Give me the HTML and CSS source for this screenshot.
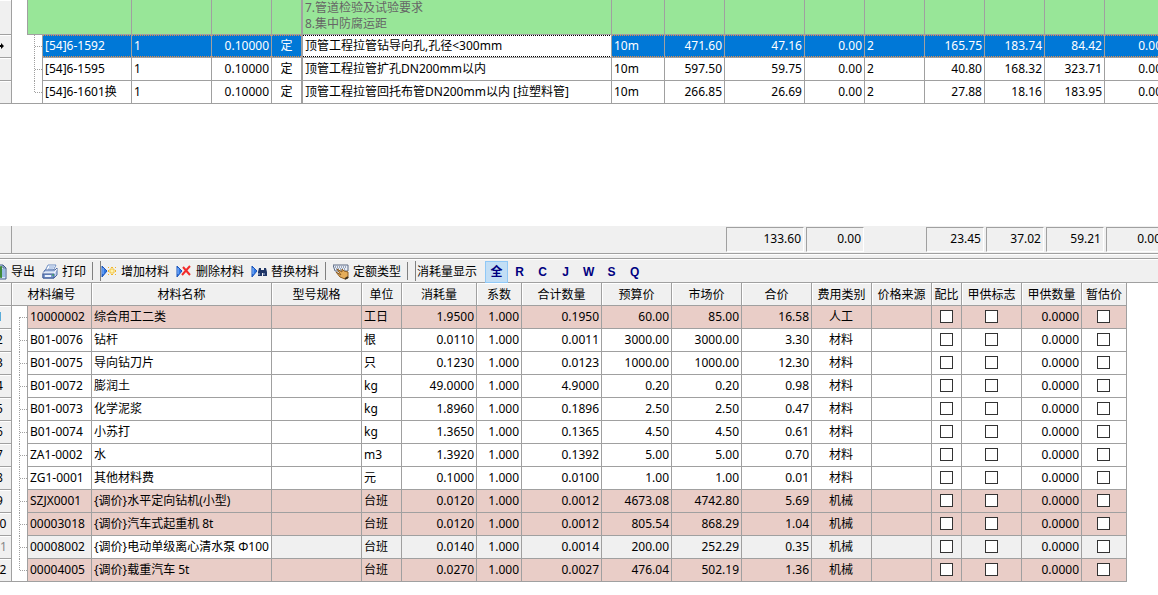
FILE: index.html
```html
<!DOCTYPE html>
<html lang="zh-CN">
<head>
<meta charset="utf-8">
<title>定额材料</title>
<link rel="stylesheet" href="styles.css">
</head>
<body>
<main class="app">
<section class="quota-pane">
<table class="grid quota">
<colgroup><col class="w24"><col class="w16"><col class="w15"><col class="w89"><col class="w80"><col class="w60"><col class="w31"><col class="w309"><col class="w53"><col class="w60"><col class="w80"><col class="w60"><col class="w60"><col class="w60"><col class="w60"><col class="w60"><col class="w60"></colgroup>
<tbody>
<tr class="item"><th></th><td class="indent"></td><td colspan="2"></td><td></td><td></td><td></td><td>7.管道检验及试验要求<br>8.集中防腐运距</td><td></td><td></td><td></td><td></td><td></td><td></td><td></td><td></td><td></td></tr>
<tr class="selected"><th><svg class="marker" viewBox="0 0 8 8"><path d="M0 3h5V1l3 3-3 3V5H0z"/></svg></th><td class="tree" colspan="2"></td><td>[54]6-1592</td><td>1</td><td>0.10000</td><td>定</td><td>顶管工程拉管钻导向孔,孔径&lt;300mm</td><td>10m</td><td>471.60</td><td>47.16</td><td>0.00</td><td>2</td><td>165.75</td><td>183.74</td><td>84.42</td><td>0.00</td></tr>
<tr><th></th><td class="tree" colspan="2"></td><td>[54]6-1595</td><td>1</td><td>0.10000</td><td>定</td><td>顶管工程拉管扩孔DN200mm以内</td><td>10m</td><td>597.50</td><td>59.75</td><td>0.00</td><td>2</td><td>40.80</td><td>168.32</td><td>323.71</td><td>0.00</td></tr>
<tr><th></th><td class="tree" colspan="2"></td><td>[54]6-1601换</td><td>1</td><td>0.10000</td><td>定</td><td>顶管工程拉管回托布管DN200mm以内 [拉塑料管]</td><td>10m</td><td>266.85</td><td>26.69</td><td>0.00</td><td>2</td><td>27.88</td><td>18.16</td><td>183.95</td><td>0.00</td></tr>
</tbody>
</table>
</section>
<div class="totals">
<span class="corner"></span><span></span><output>133.60</output><output>0.00</output><span></span><output>23.45</output><output>37.02</output><output>59.21</output><output>0.00</output>
</div>
<div class="splitter"></div>
<div class="toolbar">
<div class="group">
<button type="button"><svg viewBox="0 0 16 16"><path d="M5 1h7l3 3v11H5z" fill="#dce8fa" stroke="#3f5a8a"/><path d="M12 1v3h3" fill="none" stroke="#3f5a8a"/><path d="M0 3l11-1v12l-11-1z" fill="#3f8a3a"/><path d="M11 6h3M11 8h3M11 10h3M11 12h3" stroke="#5a8fd0"/></svg>导出</button>
<button type="button"><svg viewBox="0 0 16 16"><path d="M6 1h8l-3 6H3z" fill="#fff" stroke="#6f8fc4"/><path d="M7 3h5M6 5h5" stroke="#7fa0d8"/><path d="M3 6h10l2-2v7l-3 3H1V9z" fill="#c3d3ef" stroke="#4b68a3"/><path d="M1 9h11l3-4" fill="none" stroke="#fff"/><path d="M1 10h11v4H1z" fill="#7f9cd0" stroke="#3f5a96"/><path d="M3 12h6" stroke="#eaf2ff" stroke-width="2"/><path d="M10 11h2" stroke="#35b347"/></svg>打印</button>
</div>
<span class="sep"></span>
<div class="group grip">
<button type="button"><svg viewBox="0 0 16 16"><path d="M1 2l5 5-5 6z" fill="#2f78e6" stroke="#1c54b8"/><path d="M2 4v6" stroke="#8ebcff"/><path d="M9 5h4v4H9z" fill="#fff3b0" stroke="#f4c542"/><path d="M7 3h1v1H7zM10 3h2v1h-2zM14 3h1v1h-1zM7 6h1v2H7zM14 6h1v2h-1zM7 10h1v1H7zM10 10h2v1h-2zM14 10h1v1h-1z" fill="#efb52d"/></svg>增加材料</button>
<button type="button"><svg viewBox="0 0 16 16"><path d="M1 2l5 5-5 6z" fill="#2f78e6" stroke="#1c54b8"/><path d="M2 4v6" stroke="#8ebcff"/><path d="M7 3l7 8M14 2l-8 9" stroke="#f32b2b" stroke-width="2"/></svg>删除材料</button>
<button type="button"><svg viewBox="0 0 16 16"><path d="M1 2l5 5-5 6z" fill="#2f78e6" stroke="#1c54b8"/><path d="M2 4v6" stroke="#8ebcff"/><path d="M8 4h2v2h3V4h2l1 4v4h-4V9h-1v3H7V8z" fill="#1f3566"/><path d="M8 9v2M13 9v2" stroke="#a8bde6"/></svg>替换材料</button>
</div>
<span class="sep"></span>
<div class="group">
<button type="button"><svg viewBox="0 0 16 16"><path d="M0 1h15v6H2z" fill="#e8edf5" stroke="#5c6b85"/><path d="M2 3h11M3 5h9" stroke="#4c5f80" stroke-dasharray="1 1"/><path d="M4 5l5 3V5l2 2 4 1v6l-3 1-5-2-4-5 5 3z" fill="#e5ad5a" stroke="#8e5d21"/><path d="M12 15l3-2" stroke="#3b3020" stroke-width="2"/></svg>定额类型</button>
</div>
<span class="sep"></span>
<div class="group grip">
<span class="caption">消耗量显示</span>
<div class="modes"><button type="button" class="on" aria-pressed="true">全</button><button type="button">R</button><button type="button">C</button><button type="button">J</button><button type="button">W</button><button type="button">S</button><button type="button">Q</button></div>
</div>
</div>
<section class="material-pane">
<table class="grid materials">
<colgroup><col class="w24"><col class="w16"><col class="w64"><col class="w180"><col class="w90"><col class="w40"><col class="w75"><col class="w45"><col class="w80"><col class="w70"><col class="w70"><col class="w70"><col class="w60"><col class="w60"><col class="w30"><col class="w60"><col class="w60"><col class="w45"></colgroup>
<thead>
<tr><th></th><th colspan="2">材料编号</th><th>材料名称</th><th>型号规格</th><th>单位</th><th>消耗量</th><th>系数</th><th>合计数量</th><th>预算价</th><th>市场价</th><th>合价</th><th>费用类别</th><th>价格来源</th><th>配比</th><th>甲供标志</th><th>甲供数量</th><th>暂估价</th></tr>
</thead>
<tbody>
<tr class="adjusted"><th>1</th><td class="tree"></td><td>10000002</td><td>综合用工二类</td><td></td><td>工日</td><td>1.9500</td><td>1.000</td><td>0.1950</td><td>60.00</td><td>85.00</td><td>16.58</td><td>人工</td><td></td><td><input type="checkbox" aria-label="配比"></td><td><input type="checkbox" aria-label="甲供标志"></td><td>0.0000</td><td><input type="checkbox" aria-label="暂估价"></td></tr>
<tr><th>2</th><td class="tree"></td><td>B01-0076</td><td>钻杆</td><td></td><td>根</td><td>0.0110</td><td>1.000</td><td>0.0011</td><td>3000.00</td><td>3000.00</td><td>3.30</td><td>材料</td><td></td><td><input type="checkbox" aria-label="配比"></td><td><input type="checkbox" aria-label="甲供标志"></td><td>0.0000</td><td><input type="checkbox" aria-label="暂估价"></td></tr>
<tr><th>3</th><td class="tree"></td><td>B01-0075</td><td>导向钻刀片</td><td></td><td>只</td><td>0.1230</td><td>1.000</td><td>0.0123</td><td>1000.00</td><td>1000.00</td><td>12.30</td><td>材料</td><td></td><td><input type="checkbox" aria-label="配比"></td><td><input type="checkbox" aria-label="甲供标志"></td><td>0.0000</td><td><input type="checkbox" aria-label="暂估价"></td></tr>
<tr><th>4</th><td class="tree"></td><td>B01-0072</td><td>膨润土</td><td></td><td>kg</td><td>49.0000</td><td>1.000</td><td>4.9000</td><td>0.20</td><td>0.20</td><td>0.98</td><td>材料</td><td></td><td><input type="checkbox" aria-label="配比"></td><td><input type="checkbox" aria-label="甲供标志"></td><td>0.0000</td><td><input type="checkbox" aria-label="暂估价"></td></tr>
<tr><th>5</th><td class="tree"></td><td>B01-0073</td><td>化学泥浆</td><td></td><td>kg</td><td>1.8960</td><td>1.000</td><td>0.1896</td><td>2.50</td><td>2.50</td><td>0.47</td><td>材料</td><td></td><td><input type="checkbox" aria-label="配比"></td><td><input type="checkbox" aria-label="甲供标志"></td><td>0.0000</td><td><input type="checkbox" aria-label="暂估价"></td></tr>
<tr><th>6</th><td class="tree"></td><td>B01-0074</td><td>小苏打</td><td></td><td>kg</td><td>1.3650</td><td>1.000</td><td>0.1365</td><td>4.50</td><td>4.50</td><td>0.61</td><td>材料</td><td></td><td><input type="checkbox" aria-label="配比"></td><td><input type="checkbox" aria-label="甲供标志"></td><td>0.0000</td><td><input type="checkbox" aria-label="暂估价"></td></tr>
<tr><th>7</th><td class="tree"></td><td>ZA1-0002</td><td>水</td><td></td><td>m3</td><td>1.3920</td><td>1.000</td><td>0.1392</td><td>5.00</td><td>5.00</td><td>0.70</td><td>材料</td><td></td><td><input type="checkbox" aria-label="配比"></td><td><input type="checkbox" aria-label="甲供标志"></td><td>0.0000</td><td><input type="checkbox" aria-label="暂估价"></td></tr>
<tr><th>8</th><td class="tree"></td><td>ZG1-0001</td><td>其他材料费</td><td></td><td>元</td><td>0.1000</td><td>1.000</td><td>0.0100</td><td>1.00</td><td>1.00</td><td>0.01</td><td>材料</td><td></td><td><input type="checkbox" aria-label="配比"></td><td><input type="checkbox" aria-label="甲供标志"></td><td>0.0000</td><td><input type="checkbox" aria-label="暂估价"></td></tr>
<tr class="adjusted"><th>9</th><td class="tree"></td><td>SZJX0001</td><td>{调价}水平定向钻机(小型)</td><td></td><td>台班</td><td>0.0120</td><td>1.000</td><td>0.0012</td><td>4673.08</td><td>4742.80</td><td>5.69</td><td>机械</td><td></td><td><input type="checkbox" aria-label="配比"></td><td><input type="checkbox" aria-label="甲供标志"></td><td>0.0000</td><td><input type="checkbox" aria-label="暂估价"></td></tr>
<tr class="adjusted"><th>10</th><td class="tree"></td><td>00003018</td><td>{调价}汽车式起重机 8t</td><td></td><td>台班</td><td>0.0120</td><td>1.000</td><td>0.0012</td><td>805.54</td><td>868.29</td><td>1.04</td><td>机械</td><td></td><td><input type="checkbox" aria-label="配比"></td><td><input type="checkbox" aria-label="甲供标志"></td><td>0.0000</td><td><input type="checkbox" aria-label="暂估价"></td></tr>
<tr class="current"><th><svg class="marker" viewBox="0 0 8 8"><path d="M0 3h5V1l3 3-3 3V5H0z"/></svg>1</th><td class="tree"></td><td>00008002</td><td>{调价}电动单级离心清水泵 Φ100</td><td></td><td>台班</td><td>0.0140</td><td>1.000</td><td>0.0014</td><td>200.00</td><td>252.29</td><td>0.35</td><td>机械</td><td></td><td><input type="checkbox" aria-label="配比"></td><td><input type="checkbox" aria-label="甲供标志"></td><td>0.0000</td><td><input type="checkbox" aria-label="暂估价"></td></tr>
<tr class="adjusted"><th>12</th><td class="tree"></td><td>00004005</td><td>{调价}载重汽车 5t</td><td></td><td>台班</td><td>0.0270</td><td>1.000</td><td>0.0027</td><td>476.04</td><td>502.19</td><td>1.36</td><td>机械</td><td></td><td><input type="checkbox" aria-label="配比"></td><td><input type="checkbox" aria-label="甲供标志"></td><td>0.0000</td><td><input type="checkbox" aria-label="暂估价"></td></tr>
</tbody>
</table>
</section>
</main>
</body>
</html>
```
FILE: styles.css
```css
:root {
  --line: #a0a0a0;
  --face: #f0f0f0;
  --green: #98e698;
  --pink: #e9cdc7;
  --blue: #0078d7;
}
* { box-sizing: border-box; }
body {
  margin: 0;
  overflow: hidden;
  background: #fff;
  color: #000;
  font: 12px/16px "Noto Sans", "Noto Sans CJK SC", sans-serif;
}
/* The window is scrolled a little to the right, so the left gutter is partly hidden. */
.app {
  display: flex;
  flex-direction: column;
  min-height: 100vh;
  margin-left: -12px;
}
.quota-pane { flex: 0 0 226px; overflow: hidden; }
.material-pane { overflow: hidden; }

/* Shared grid */
.grid {
  width: 0;
  table-layout: fixed;
  border-collapse: separate;
  border-spacing: 0;
}
.w15 { width: 15px; } .w16 { width: 16px; } .w24 { width: 24px; }
.w30 { width: 30px; } .w31 { width: 31px; } .w40 { width: 40px; }
.w45 { width: 45px; } .w53 { width: 53px; } .w60 { width: 60px; }
.w64 { width: 64px; } .w70 { width: 70px; } .w75 { width: 75px; }
.w80 { width: 80px; } .w89 { width: 89px; } .w90 { width: 90px; }
.w180 { width: 180px; } .w309 { width: 309px; }
.grid th, .grid td {
  height: 23px;
  padding: 0 2px;
  overflow: hidden;
  white-space: nowrap;
  text-align: left;
  vertical-align: middle;
  font-weight: 400;
  border-right: 1px solid var(--line);
  border-bottom: 1px solid var(--line);
}
.grid th {
  padding: 0;
  text-align: center;
  background: var(--face);
  box-shadow: inset 1px 1px #fff;
}
.grid thead th { padding-top: 2px; }
.marker { width: 8px; height: 8px; }
.grid .tree { position: relative; border-bottom: 0; }
.tree::before, .tree::after {
  content: "";
  position: absolute;
  border: 0 dotted var(--line);
}
.tree::before { top: 0; bottom: 0; right: 7px; border-right-width: 1px; }
.tree::after { top: 11px; right: 0; width: 7px; border-top-width: 1px; }
.grid tr:last-child .tree::before { bottom: 11px; }

/* Quota grid */
.quota td:nth-child(5), .quota td:nth-child(9), .quota td:nth-child(10),
.quota td:nth-child(11), .quota td:nth-child(13), .quota td:nth-child(14),
.quota td:nth-child(15), .quota td:nth-child(16) { text-align: right; }
.quota td:nth-child(6) { padding: 0; text-align: center; border-right-width: 2px; }
.quota .item td {
  height: 35px;
  padding-bottom: 2px;
  color: #666;
  line-height: 17px;
  vertical-align: bottom;
  background: var(--green);
}
.quota .item td:nth-child(7) { padding-top: 0; line-height: 16px; }
.quota .item .indent { background: #fff; border-bottom: 0; }
.quota tr:last-child .tree { border-bottom: 1px solid var(--line); }
.selected td:not(.tree) {
  --dots: linear-gradient(90deg, #e08c4a 50%, var(--blue) 50%);
  color: #fff;
  background-color: var(--blue);
  background-image: var(--dots), var(--dots);
  background-position: 0 0, 0 100%;
  background-size: 2px 1px;
  background-repeat: repeat-x;
  background-origin: padding-box;
}
.selected td:nth-child(7):not(.tree) {
  --dots: linear-gradient(90deg, #000 50%, #fff 50%);
  color: #000;
  background-color: #fff;
}

/* Totals strip */
.totals {
  display: grid;
  grid-template-columns: 24px 713px 80px 60px 60px 60px 60px 60px 60px;
  height: 28px;
  background: var(--face);
  border-bottom: 1px solid var(--line);
}
.corner { border-right: 1px solid var(--line); }
.totals output {
  margin: 1px;
  padding: 3px 2px 0 0;
  text-align: right;
  border: 1px solid var(--line);
  border-color: var(--line) #fff #fff var(--line);
}
.splitter {
  height: 5px;
  background: var(--face);
  border-top: 1px solid #fff;
  border-bottom: 1px solid var(--line);
}

/* Toolbar */
.toolbar {
  display: flex;
  align-items: center;
  height: 24px;
  padding-left: 3px;
  white-space: nowrap;
  background: var(--face);
  border-top: 1px solid #fff;
  border-bottom: 1px solid var(--line);
}
.group { display: flex; align-items: center; gap: 7px; height: 20px; padding-top: 1px; }
.grip { border-left: 1px solid #808080; }
.sep { height: 18px; margin: 0 7px 0 6px; border-left: 1px solid #808080; }
.caption { margin: 0 1px; }
button {
  display: flex;
  align-items: center;
  gap: 4px;
  padding: 0;
  border: 0;
  color: inherit;
  font: inherit;
  background: none;
}
button svg { width: 16px; height: 16px; flex: none; }
.modes { display: flex; }
.modes button {
  justify-content: center;
  width: 23px;
  height: 22px;
  color: #000080;
  font: bold 12px/16px "Liberation Sans", "Noto Sans CJK SC", sans-serif;
}
.modes .on { background: #c2def5; border: 1px solid #90c8f6; }

/* Materials grid */
.materials td:nth-child(n+7):nth-child(-n+12), .materials td:nth-child(17) { text-align: right; }
.materials td:nth-child(13), .materials td:nth-child(15),
.materials td:nth-child(16), .materials td:nth-child(18) { text-align: center; }
.materials tbody tr:last-child .tree { border-bottom: 1px solid var(--line); }
.materials tbody tr:first-child .tree::before { top: 11px; }
.materials td:nth-child(n+13):not(:nth-child(17)) { padding: 0 2px 1px 1px; }
.adjusted td:not(.tree) { background: var(--pink); }
.current td:not(.tree):not(:nth-child(4)) { background: var(--face); }
.current th { color: #888; }
input[type="checkbox"] {
  appearance: none;
  display: block;
  width: 13px;
  height: 13px;
  margin: 0 auto;
  border: 1px solid #333;
  background: #fff;
}
input[type="checkbox"]:checked { background: #333; }
```
